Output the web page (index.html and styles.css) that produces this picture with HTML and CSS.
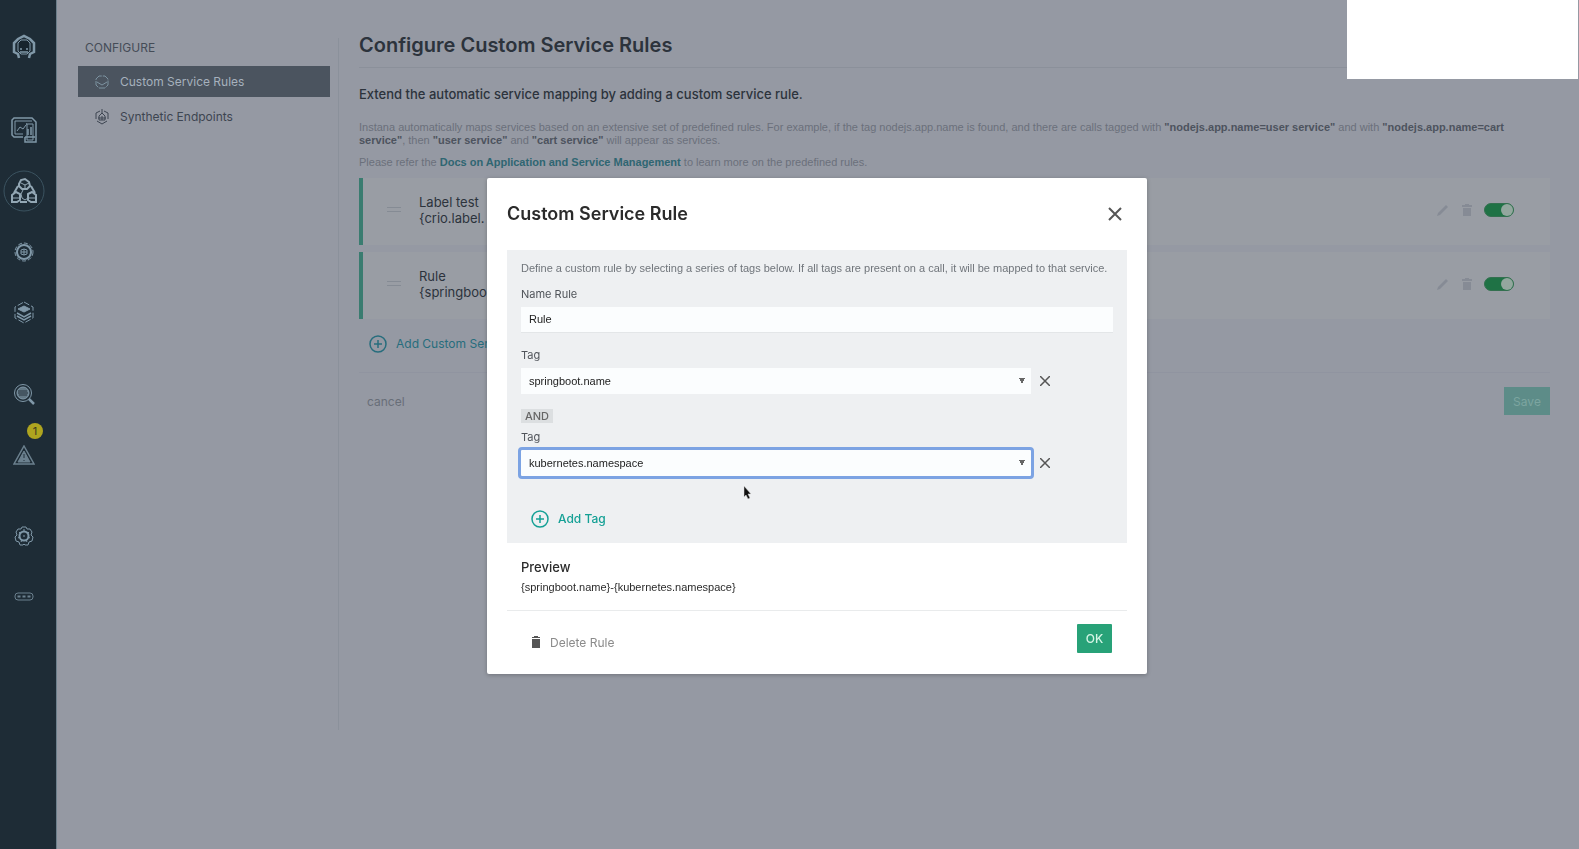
FILE: index.html
```html
<!DOCTYPE html>
<html lang="en">
<head>
<meta charset="utf-8">
<title>Configure Custom Service Rules</title>
<link rel="stylesheet" href="styles.css">
</head>
<body>
<div class="app">
  <nav class="rail" aria-label="Main">
    <a href="#" class="rail-item logo" aria-label="Home">
      <svg width="26" height="26" viewBox="0 0 26 26" fill="none" stroke="currentColor"><path d="M8 24l-1-4-4-2V9l4-4 6-3 6 3 4 4v9l-4 2-1 4" stroke-width="2.500"/><path d="M7 9l3-3h6l3 3v8l-3 3h-6l-3-3z" fill="#17242d"/><path d="M10 14v2M16 14v2M9 18h8" stroke-width="1.5"/></svg>
    </a>
    <a href="#" class="rail-item dash" aria-label="Websites">
      <svg width="28" height="28" viewBox="0 0 28 28" fill="none" stroke="currentColor"><path d="M13 21H4l-2-2V4l2-2h18l4 4v20H15v-5" stroke-width="1.5"/><path d="M13 18H5V5h17" /><path d="M7 15l3-4 3 2 3-4"/><path d="M16 8h7v16h-6V8z"/><path d="M18 13v6M21 11v8M15 21h10" stroke-width="1.5"/></svg>
    </a>
    <a href="#" class="rail-item active" aria-label="Applications" aria-current="page">
      <svg width="42" height="42" viewBox="0 0 42 42" fill="none" stroke="currentColor"><circle cx="21" cy="21" r="20" stroke="#3b5360"/><path d="M16 14l2-4 4-1 4 3 1 4-3 3h-5l-3-3zM15 16l-4 7M28 16l4 7M17 32h7" stroke-width="2"/><path d="M9 25l4-3 4 2v6l-3 2H9zM25 24l4-2 4 3v7h-5l-3-2z" stroke-width="2"/><path d="M18 13l4 2 4-2M22 15v4M20 20l-2 4 1 4 3 2 3-2v-4M10 28h6M26 28h6"/></svg>
    </a>
    <a href="#" class="rail-item" aria-label="Platforms">
      <svg width="22" height="22" viewBox="0 0 22 22" fill="none" stroke="currentColor"><circle cx="11" cy="11" r="7" stroke-width="2"/><circle cx="11" cy="11" r="9" stroke-dasharray="4 2"/><path d="M8 9v4l3 1 3-1V9l-3-1zM8 11h6M11 8v6"/></svg>
    </a>
    <a href="#" class="rail-item" aria-label="Infrastructure">
      <svg width="22" height="24" viewBox="0 0 22 24" fill="none" stroke="currentColor"><path d="M11 1l9 5v11l-9 5-9-5V6z" stroke-dasharray="6 2"/><path d="M5 8l6-3 6 3-6 3z" fill="currentColor"/><path d="M4 12l7 4 7-4M4 15l7 4 7-4" stroke-width="1.5"/></svg>
    </a>
    <a href="#" class="rail-item search" aria-label="Analytics">
      <svg width="22" height="22" viewBox="0 0 22 22" fill="none" stroke="currentColor"><circle cx="10" cy="10" r="8.500"/><circle cx="10" cy="10" r="6" fill="#647986"/><path d="M5 8h9M5 10h10M6 12h8" stroke="#26343e"/><path d="M16 16l5 5" stroke-width="2.500"/></svg>
    </a>
    <a href="#" class="rail-item alert" aria-label="Events, 1 open">
      <svg width="22" height="20" viewBox="0 0 22 20" fill="none" stroke="currentColor"><path d="M11 1l10 18H1z" stroke-width="1.5"/><path d="M11 6l6 11H5z" fill="currentColor"/><path d="M11 9v4M11 15v1" stroke="#22303a"/></svg>
      <span class="badge">1</span>
    </a>
    <a href="#" class="rail-item settings" aria-label="Settings">
      <svg width="20" height="20" viewBox="0 0 20 20" fill="none" stroke="currentColor"><path d="M8 1h4l1 2 3 0 2 3-1 3 2 2-1 4-3 1-1 3-3 0-1-1-1 1-3 0-1-3-3-1-1-4 2-2-1-3 2-3 3 0z"/><circle cx="10" cy="10" r="4.500" stroke-width="2"/><path d="M10 3v3M5 6l2 2M15 6l-2 2M4 12l2-1M16 12l-2-1M7 16l1-2M13 16l-1-2M9 10h2"/></svg>
    </a>
    <a href="#" class="rail-item more" aria-label="More">
      <svg width="20" height="10" viewBox="0 0 20 10" fill="none" stroke="currentColor"><rect x="1" y="1" width="18" height="7" rx="3"/><path d="M3.500 4.500h3M8.500 4.500h3M13.500 4.500h3" stroke-width="2"/></svg>
    </a>
  </nav>

  <aside class="side">
    <h2 class="side-title">CONFIGURE</h2>
    <a href="#" class="side-link selected" aria-current="page">
      <svg width="16" height="16" viewBox="0 0 16 16" fill="none" stroke="currentColor"><path d="M2 5l3-3h6l3 3v6l-3 3H5l-3-3z" stroke-dasharray="7 1"/><path d="M3 8l5 3 5-3"/></svg>
      Custom Service Rules
    </a>
    <a href="#" class="side-link">
      <svg width="16" height="16" viewBox="0 0 16 16" fill="none" stroke="currentColor"><path d="M6 2L2 4v6M10 2l4 2v6M3 12l5 3 5-3M8 0v5"/><path d="M8 4l3 3v4H5V7zM4 9h8M8 7v4"/></svg>
      Synthetic Endpoints
    </a>
  </aside>

  <main class="main">
    <h1 class="title">Configure Custom Service Rules</h1>
    <p class="lead">Extend the automatic service mapping by adding a custom service rule.</p>
    <p class="note">Instana automatically maps services based on an extensive set of predefined rules. For example, if the tag nodejs.app.name is found, and there are calls tagged with <b>"nodejs.app.name=user service"</b> and with <b>"nodejs.app.name=cart service"</b>, then <b>"user service"</b> and <b>"cart service"</b> will appear as services.</p>
    <p class="note">Please refer the <a href="#">Docs on Application and Service Management</a> to learn more on the predefined rules.</p>

    <ul class="rules">
      <li class="rule">
        <span class="handle"></span>
        <div class="rule-text">Label test<br>{crio.label.</div>
        <button class="icon-btn" aria-label="Edit Label test"><svg width="14" height="14" viewBox="0 0 14 14"><path d="M1 13l1-3 8-8 2 2-8 8z" fill="currentColor"/></svg></button>
        <button class="icon-btn" aria-label="Delete Label test"><svg width="14" height="14" viewBox="0 0 14 14"><path d="M2 2h3V1h4v1h3v2H2zM3 5h8v8H3z" fill="currentColor"/></svg></button>
        <input class="toggle" type="checkbox" checked aria-label="Label test enabled">
      </li>
      <li class="rule">
        <span class="handle"></span>
        <div class="rule-text">Rule<br>{springboo</div>
        <button class="icon-btn" aria-label="Edit Rule"><svg width="14" height="14" viewBox="0 0 14 14"><path d="M1 13l1-3 8-8 2 2-8 8z" fill="currentColor"/></svg></button>
        <button class="icon-btn" aria-label="Delete Rule"><svg width="14" height="14" viewBox="0 0 14 14"><path d="M2 2h3V1h4v1h3v2H2zM3 5h8v8H3z" fill="currentColor"/></svg></button>
        <input class="toggle" type="checkbox" checked aria-label="Rule enabled">
      </li>
    </ul>
    <button class="add add-rule">
      <svg width="18" height="18" viewBox="0 0 18 18" fill="none" stroke="currentColor" stroke-width="1.500"><circle cx="9" cy="9" r="8"/><path d="M9 5v8M5 9h8"/></svg>
      Add Custom Ser
    </button>
    <div class="actions">
      <button class="cancel">cancel</button>
      <button class="save">Save</button>
    </div>
  </main>
</div>

<div class="corner"></div>

<div class="overlay">
  <section class="modal" role="dialog" aria-labelledby="modal-title">
    <header class="modal-head">
      <h2 class="modal-title" id="modal-title">Custom Service Rule</h2>
      <button class="close" aria-label="Close"><svg width="14" height="14" viewBox="0 0 14 14" stroke="currentColor" stroke-width="2"><path d="M1 1l12 12M13 1L1 13"/></svg></button>
    </header>
    <div class="panel">
      <p class="hint">Define a custom rule by selecting a series of tags below. If all tags are present on a call, it will be mapped to that service.</p>
      <label class="label" for="name">Name Rule</label>
      <input class="field" id="name" type="text" value="Rule">
      <label class="label second" for="tag1">Tag</label>
      <div class="tag-row">
        <select class="field select" id="tag1"><option>springboot.name</option></select>
        <button class="remove" aria-label="Remove tag springboot.name"><svg width="10" height="10" viewBox="0 0 10 10" stroke="currentColor" stroke-width="1.500"><path d="M0 0l10 10M10 0L0 10"/></svg></button>
      </div>
      <span class="and">AND</span>
      <label class="label" for="tag2">Tag</label>
      <div class="tag-row">
        <select class="field select focused" id="tag2"><option>kubernetes.namespace</option></select>
        <button class="remove" aria-label="Remove tag kubernetes.namespace"><svg width="10" height="10" viewBox="0 0 10 10" stroke="currentColor" stroke-width="1.500"><path d="M0 0l10 10M10 0L0 10"/></svg></button>
      </div>
      <button class="add add-tag">
        <svg width="18" height="18" viewBox="0 0 18 18" fill="none" stroke="currentColor" stroke-width="1.500"><circle cx="9" cy="9" r="8"/><path d="M9 5v8M5 9h8"/></svg>
        Add Tag
      </button>
    </div>
    <div class="preview">
      <h3 class="preview-title">Preview</h3>
      <p class="preview-text">{springboot.name}-{kubernetes.namespace}</p>
    </div>
    <footer class="modal-foot">
      <button class="delete">
        <svg width="8" height="12" viewBox="0 0 8 12"><path d="M0 1h2V0h4v1h2v1H0zM0 3h8v9H0z" fill="#555"/></svg>
        Delete Rule
      </button>
      <button class="ok">OK</button>
    </footer>
    <svg class="cursor" width="9" height="14" viewBox="0 0 9 14"><path d="M1 0v11l2-2 2 4 2-1-2-4h3z" fill="#111" stroke="#ddd" stroke-width=".5"/></svg>
  </section>
</div>
</body>
</html>
```

FILE: styles.css
```css
* { box-sizing: border-box; }
body {
  margin: 0;
  background: #9599a3;
  color: #2c333c;
  font-family: Inter, "Liberation Sans", sans-serif;
  font-size: 12px;
}
h1, h2, h3, p, ul { margin: 0; padding: 0; }
button { border: 0; padding: 0; background: none; font: inherit; color: inherit; }
a { color: inherit; text-decoration: none; }
svg { display: block; flex: none; }

.app { display: flex; min-height: 100vh; }

.rail {
  width: 57px;
  flex: none;
  padding: 30px 8px 0 0;
  background: #1e2c36;
  border-right: 1px solid #6c7f8b;
  color: #8098a8;
  display: flex;
  flex-direction: column;
  align-items: center;
}
.rail-item { height: 61px; width: 48px; display: grid; place-items: center; position: relative; }
.rail-item.logo { height: 34px; margin-bottom: 35px; }
.rail-item.active { color: #93a7b4; }
.rail-item.search { margin-top: 20px; }
.rail-item.alert, .rail-item.more { color: #6b808e; }
.rail-item.settings { margin-top: 20px; }
.badge {
  position: absolute;
  top: -1px;
  left: 27px;
  width: 16px;
  height: 16px;
  border-radius: 50%;
  background: #afa51f;
  color: #3c3a20;
  font-size: 11px;
  line-height: 16px;
  text-align: center;
}

.side {
  width: 282px;
  height: 692px;
  flex: none;
  margin-top: 38px;
  padding: 0 8px 0 21px;
  border-right: 1px solid #8b919b;
}
.side-title { padding: 2px 7px 0; font-size: 12px; line-height: 16px; font-weight: 400; color: #454c57; margin-bottom: 10px; }
.side-link { height: 31px; margin-bottom: 4px; padding-left: 16px; display: flex; align-items: center; gap: 10px; font-size: 12px; color: #3d4551; }
.side-link.selected { background: #4b545f; color: #a6b1bd; }
.side-link.selected svg { color: #7d93a1; }

.main { flex: 1; min-width: 0; padding: 30px 29px 0 20px; }
.title { font-size: 20px; line-height: 30px; font-weight: 600; padding-bottom: 7px; border-bottom: 1px solid #8b909a; margin-bottom: 16px; }
.lead { font-size: 13px; font-weight: 500; line-height: 20px; margin-bottom: 17px; }
.note { font-family: "Liberation Sans", sans-serif; font-size: 11px; line-height: 13px; color: #6b707b; margin: 0 28px 9px 0; }
.note b { color: #4d535e; font-weight: 700; }
.note a { color: #2f6672; font-weight: 700; }

.rules { list-style: none; display: grid; gap: 7px; margin-top: 8px; }
.rule {
  height: 67px;
  padding: 0 36px 4px 24px;
  border-left: 4px solid #3a7c70;
  background: #999da4;
  display: flex;
  align-items: center;
  gap: 10px;
}
.handle { width: 14px; height: 5px; border: solid #858b94; border-width: 1px 0; margin-right: 8px; }
.rule-text { flex: 1; font-size: 13px; line-height: 16px; }
.icon-btn { color: #868b95; }
.toggle {
  appearance: none;
  width: 30px;
  height: 14px;
  margin: 0;
  border-radius: 7px;
  background: #1f7245;
  border: 1px solid #33704f;
  display: flex;
  justify-content: flex-end;
}
.toggle::before { content: ""; width: 12px; height: 12px; border-radius: 50%; background: #93a79e; }

.add { display: flex; align-items: center; gap: 9px; line-height: 18px; }
.add-rule { margin: 16px 0 0 10px; font-size: 12px; color: #276d7d; }
.actions { margin-top: 19px; padding-top: 14px; border-top: 1px solid #9094a0; display: flex; justify-content: space-between; align-items: center; }
.cancel { margin-left: 8px; font-size: 12px; color: #686e78; }
.save { width: 46px; height: 28px; background: #5d8c88; color: #7ca5a0; }

.corner { position: absolute; top: 0; right: 1px; width: 231px; height: 79px; background: #fff; }

.overlay { position: fixed; inset: 2px 0 0 55px; display: grid; place-items: center; }
.modal {
  position: relative;
  width: 660px;
  padding: 21px 20px;
  background: #fff;
  border-radius: 2px;
  box-shadow: 0 1px 4px rgba(0, 0, 0, .25);
  color: #2b2b2b;
}
.modal-head { display: flex; justify-content: space-between; align-items: center; padding-right: 5px; margin-bottom: 21px; }
.modal-title { font-size: 18px; line-height: 30px; font-weight: 600; }
.close { color: #555; }
.panel { padding: 10px 14px 15px; background: #eef0f2; }
.hint { font-family: "Liberation Sans", sans-serif; font-size: 11px; line-height: 16px; color: #70757b; margin-bottom: 10px; }
.label { display: block; font-size: 11px; line-height: 16px; color: #50545a; }
.label.second { margin-top: 14px; }
.field {
  display: block;
  width: 100%;
  height: 26px;
  margin-top: 5px;
  padding: 0 8px;
  border: 0;
  background: #fbfdfe;
  color: #222;
  font: 11px/24px "Liberation Sans", sans-serif;
}
input.field { border-bottom: 1px solid #e3e6e8; }
.tag-row { display: flex; align-items: center; gap: 9px; padding-right: 63px; }
.tag-row .remove { margin-top: 5px; color: #555; }
.select {
  appearance: none;
  border-radius: 0;
  background-image: linear-gradient(to bottom left, #666 50%, transparent 50%), linear-gradient(to bottom right, #666 50%, transparent 50%);
  background-repeat: no-repeat;
  background-size: 3px 6px;
  background-position: right 9px center, right 6px center;
}
.focused { outline: 3px solid #7ca3e3; border-radius: 1px; }
.and { display: table; margin: 15px 0 6px; padding: 0 4px; background: #dcdfe1; color: #666; font-size: 11px; line-height: 14px; font-weight: 500; }
.add-tag { margin: 34px 0 0 10px; font-size: 12px; font-weight: 500; color: #14a095; }
.preview { padding: 14px 14px 13px; border-bottom: 1px solid #e9ebec; }
.preview-title { font-size: 13px; line-height: 20px; font-weight: 500; }
.preview-text { font-family: "Liberation Sans", sans-serif; font-size: 11px; line-height: 20px; }
.modal-foot { display: flex; justify-content: space-between; align-items: center; padding: 13px 15px 0 25px; }
.delete { display: flex; align-items: center; gap: 10px; font-size: 12px; color: #8b8b8b; padding-top: 8px; }
.ok { width: 35px; height: 29px; border-radius: 1px; background: #28a278; color: #d4f5e5; font-size: 12px; font-weight: 500; }
.cursor { position: absolute; left: 256px; top: 308px; }
```
